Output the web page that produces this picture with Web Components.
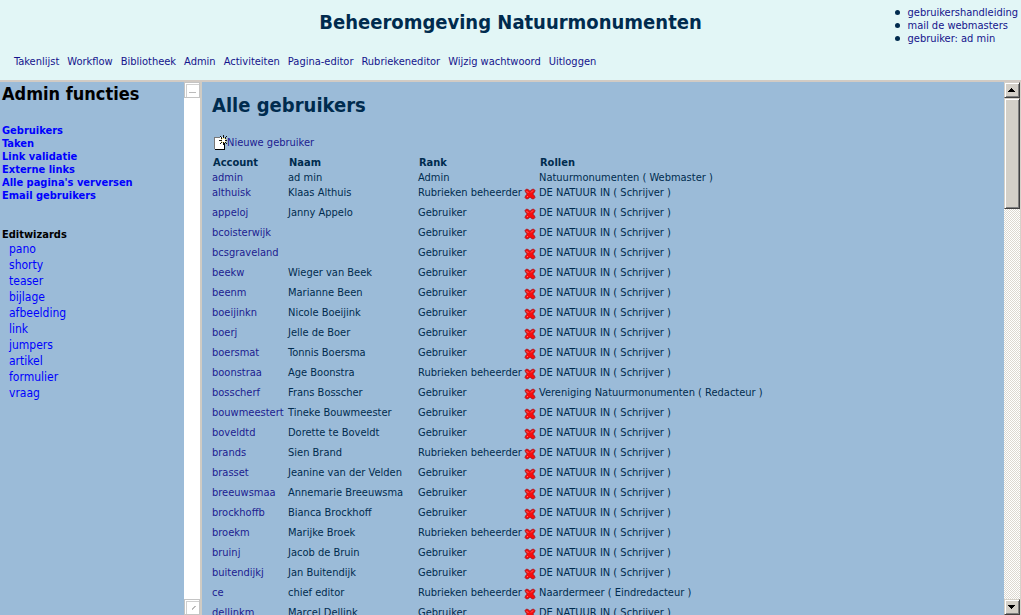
<!DOCTYPE html>
<html lang="nl">
<head>
<meta charset="utf-8">
<title>Beheeromgeving Natuurmonumenten</title>
<style>
html, body { height: 100%; margin: 0; }
body {
  font: 11px/13px "DejaVu Sans Condensed", "DejaVu Sans", Tahoma, sans-serif;
  color: #002b4e;
  overflow: hidden;
}
</style>
</head>
<body>
<admin-app></admin-app>
<script>
class Base extends HTMLElement {
  constructor() {
    super();
    this.attachShadow({ mode: "open" });
  }
  connectedCallback() { this.shadowRoot.innerHTML = this.render(); }
}

customElements.define("page-header", class extends Base {
  render() {
    const nav = ["Takenlijst", "Workflow", "Bibliotheek", "Admin", "Activiteiten", "Pagina-editor", "Rubriekeneditor", "Wijzig wachtwoord", "Uitloggen"];
    const links = ["gebruikershandleiding", "mail de webmasters", "gebruiker: ad min"];
    return `<style>
      :host { display: block; position: relative; height: 80px; background: #e2f6f6; border-bottom: 2px solid #d2cbc4; }
      h1 { margin: 0; padding-top: 9px; font-size: 20px; line-height: 26px; text-align: center; }
      nav { display: flex; gap: 8px; padding: 20px 14px 0; }
      a { color: #14148c; text-decoration: none; white-space: nowrap; }
      ul { position: absolute; top: 6px; right: 3px; margin: 0; padding: 0; list-style: none; }
      li { display: flex; align-items: center; gap: 8px; }
      li::before { content: ""; width: 5px; height: 5px; border-radius: 50%; background: #002b4e; }
    </style>
    <h1>Beheeromgeving Natuurmonumenten</h1>
    <nav>${nav.map(t => `<a href="#">${t}</a>`).join("")}</nav>
    <ul>${links.map(t => `<li><a href="#">${t}</a></li>`).join("")}</ul>`;
  }
});

customElements.define("side-menu", class extends Base {
  render() {
    const main = ["Gebruikers", "Taken", "Link validatie", "Externe links", "Alle pagina's verversen", "Email gebruikers"];
    const wiz = ["pano", "shorty", "teaser", "bijlage", "afbeelding", "link", "jumpers", "artikel", "formulier", "vraag"];
    return `<style>
      :host { display: block; padding: 0 2px; background: #9bbbd8; color: #000; overflow: hidden; }
      h2 { margin: 0 0 18px; font-size: 18px; line-height: 24px; white-space: nowrap; }
      h3 { margin: 26px 0 0; font-size: 11px; line-height: 13px; }
      a { display: block; color: #00f; text-decoration: none; }
      .main { font-weight: bold; }
      .wiz { padding-left: 7px; font-size: 12px; line-height: 16px; }
    </style>
    <h2>Admin functies</h2>
    <nav class="main">${main.map(t => `<a href="#">${t}</a>`).join("")}</nav>
    <h3>Editwizards</h3>
    <nav class="wiz">${wiz.map(t => `<a href="#">${t}</a>`).join("")}</nav>`;
  }
});

customElements.define("idle-scrollbar", class extends Base {
  render() {
    return `<style>
      :host { display: flex; flex-direction: column; justify-content: space-between; background: #fff; border-right: 2px solid #d0cbc3; }
      button { display: block; width: 16px; height: 16px; padding: 0; background: #fff; border: 1px solid #c4c4c4; box-shadow: inset 1px 1px #fff, inset 2px 2px #d0d0d0; }
      svg { display: block; }
    </style>
    <button aria-label="Omhoog"><svg width="14" height="14"><path d="M4 9.5h7" stroke="#bbb"/></svg></button>
    <button aria-label="Omlaag"><svg width="14" height="14"><path d="M7 10l4-4M7 9l3-3" stroke="#bbb"/></svg></button>`;
  }
});

customElements.define("classic-scrollbar", class extends Base {
  render() {
    return `<style>
      :host { display: flex; flex-direction: column; border-right: 1px solid #d6d2ca;
        background: repeating-conic-gradient(#fff 0 25%, #dcd8d0 0 50%) 0 0 / 2px 2px; }
      button, .thumb { box-sizing: border-box; width: 16px; background: #d4d0c8; border: 1px solid;
        border-color: #d4d0c8 #404040 #404040 #d4d0c8; box-shadow: inset 1px 1px #fff, inset -1px -1px #808080; }
      button { display: block; height: 16px; padding: 0; flex: none; }
      .thumb { height: 111px; }
      .space { flex: 1; }
      svg { display: block; }
    </style>
    <button aria-label="Omhoog"><svg width="14" height="14" shape-rendering="crispEdges"><path d="M6 5h1v1h1v1h1v1h1v1H3V8h1V7h1V6h1z"/></svg></button>
    <div class="thumb"></div><div class="space"></div>
    <button aria-label="Omlaag"><svg width="14" height="14" shape-rendering="crispEdges"><path d="M3 5h7v1H9v1H8v1H7v1H6V8H5V7H4V6H3z"/></svg></button>`;
  }
});

customElements.define("delete-icon", class extends Base {
  render() {
    return `<style>:host, svg { display: block; }</style>
    <svg width="12" height="12" viewBox="0 0 12 12"><path d="M2.5 1L4 1.500 6 3.200 8 1.500 9.500 1 11 2.500 10.500 4 8.800 6l1.700 2 .5 1.500L9.500 11 8 10.700 6 9 4 10.700 2.500 11 1 9.500 1.500 8l1.700-2L1.500 4 1 2.500z" fill="#f80c0c" stroke="#a01420" stroke-width=".8"/><path d="M2.500 3l2 2M9 2.500L7 4.500M3 9l1-1" stroke="#ff6a6a"/></svg>`;
  }
});

customElements.define("new-icon", class extends Base {
  render() {
    return `<style>:host, svg { display: block; }</style>
    <svg width="14" height="16" viewBox="0 0 14 16" shape-rendering="crispEdges"><path d="M1 2h10v12H1z" fill="#fff"/><path d="M1 2h6v1H2v11H1z" fill="#777"/><path d="M2 14h9V8h1v7H2z" fill="#000"/>
    <path d="M8 3h5v5H8z" fill="#f4e79a"/><path d="M10 0h1v3h-1zM10 7h1v3h-1zM6 5h3v1H6zM12 5h2v1h-2zM7 1h1v1H7zM8 2h1v2H8zM13 1h1v1h-1zM12 2h1v2h-1zM8 7h1v1H8zM7 8h1v1H7zM12 7h1v1h-1zM13 8h1v1h-1z" fill="#111"/><path d="M9 4h3v3H9z" fill="#fff"/></svg>`;
  }
});

customElements.define("user-list", class extends Base {
  render() {
    const R = "Rubrieken beheerder", G = "Gebruiker", S = "DE NATUUR IN ( Schrijver )";
    const rows = [
      ["althuisk", "Klaas Althuis", R], ["appeloj", "Janny Appelo"], ["bcoisterwijk", ""], ["bcsgraveland", ""],
      ["beekw", "Wieger van Beek"], ["beenm", "Marianne Been"], ["boeijinkn", "Nicole Boeijink"], ["boerj", "Jelle de Boer"],
      ["boersmat", "Tonnis Boersma"], ["boonstraa", "Age Boonstra", R],
      ["bosscherf", "Frans Bosscher", G, "Vereniging Natuurmonumenten ( Redacteur )"],
      ["bouwmeestert", "Tineke Bouwmeester"], ["boveldtd", "Dorette te Boveldt"], ["brands", "Sien Brand", R],
      ["brasset", "Jeanine van der Velden"], ["breeuwsmaa", "Annemarie Breeuwsma"], ["brockhoffb", "Bianca Brockhoff"],
      ["broekm", "Marijke Broek", R], ["bruinj", "Jacob de Bruin"], ["buitendijkj", "Jan Buitendijk"],
      ["ce", "chief editor", R, "Naardermeer ( Eindredacteur )"], ["dellinkm", "Marcel Dellink"]
    ];
    return `<style>
      :host { display: block; padding: 10px 10px 0; overflow: hidden; background: #9bbbd8; }
      h2 { margin: 0; font-size: 20px; line-height: 26px; }
      .new { display: flex; width: max-content; margin: 17px 0 2px 1px; height: 18px; line-height: 16px; }
      a { color: #1c1c90; text-decoration: none; }
      table { table-layout: fixed; width: 100%; border-collapse: collapse; }
      .c1 { width: 76px; } .c2 { width: 130px; } .c3 { width: 106px; } .c4 { width: 15px; }
      th, td { padding: 1px 0; height: 18px; vertical-align: top; text-align: left; white-space: nowrap; }
      th { padding-left: 1px; }
      thead th, .first td { height: 13px; }
      delete-icon { padding-top: 2px; }
      button { display: block; padding: 0; border: 0; background: none; }
    </style>
    <h2>Alle gebruikers</h2>
    <a class="new" href="#"><new-icon></new-icon><span>Nieuwe gebruiker</span></a>
    <table>
      <colgroup><col class="c1"><col class="c2"><col class="c3"><col class="c4"><col></colgroup>
      <thead><tr><th>Account</th><th>Naam</th><th>Rank</th><th></th><th>Rollen</th></tr></thead>
      <tbody>
        <tr class="first"><td><a href="#">admin</a></td><td>ad min</td><td>Admin</td><td></td><td>Natuurmonumenten ( Webmaster )</td></tr>
        ${rows.map(([a, n, r = G, s = S]) => `<tr><td><a href="#">${a}</a></td><td>${n}</td><td>${r}</td><td><button aria-label="Verwijder ${a}"><delete-icon></delete-icon></button></td><td>${s}</td></tr>`).join("")}
      </tbody>
    </table>`;
  }
});

customElements.define("admin-app", class extends Base {
  render() {
    return `<style>
      :host { display: grid; height: 100vh; grid-template-rows: auto minmax(0, 1fr); }
      main { display: grid; grid-template-columns: 184px 18px minmax(0, 1fr) 17px; min-height: 0; }
    </style>
    <page-header></page-header>
    <main><side-menu></side-menu><idle-scrollbar></idle-scrollbar><user-list></user-list><classic-scrollbar></classic-scrollbar></main>`;
  }
});
</script>
</body>
</html>
